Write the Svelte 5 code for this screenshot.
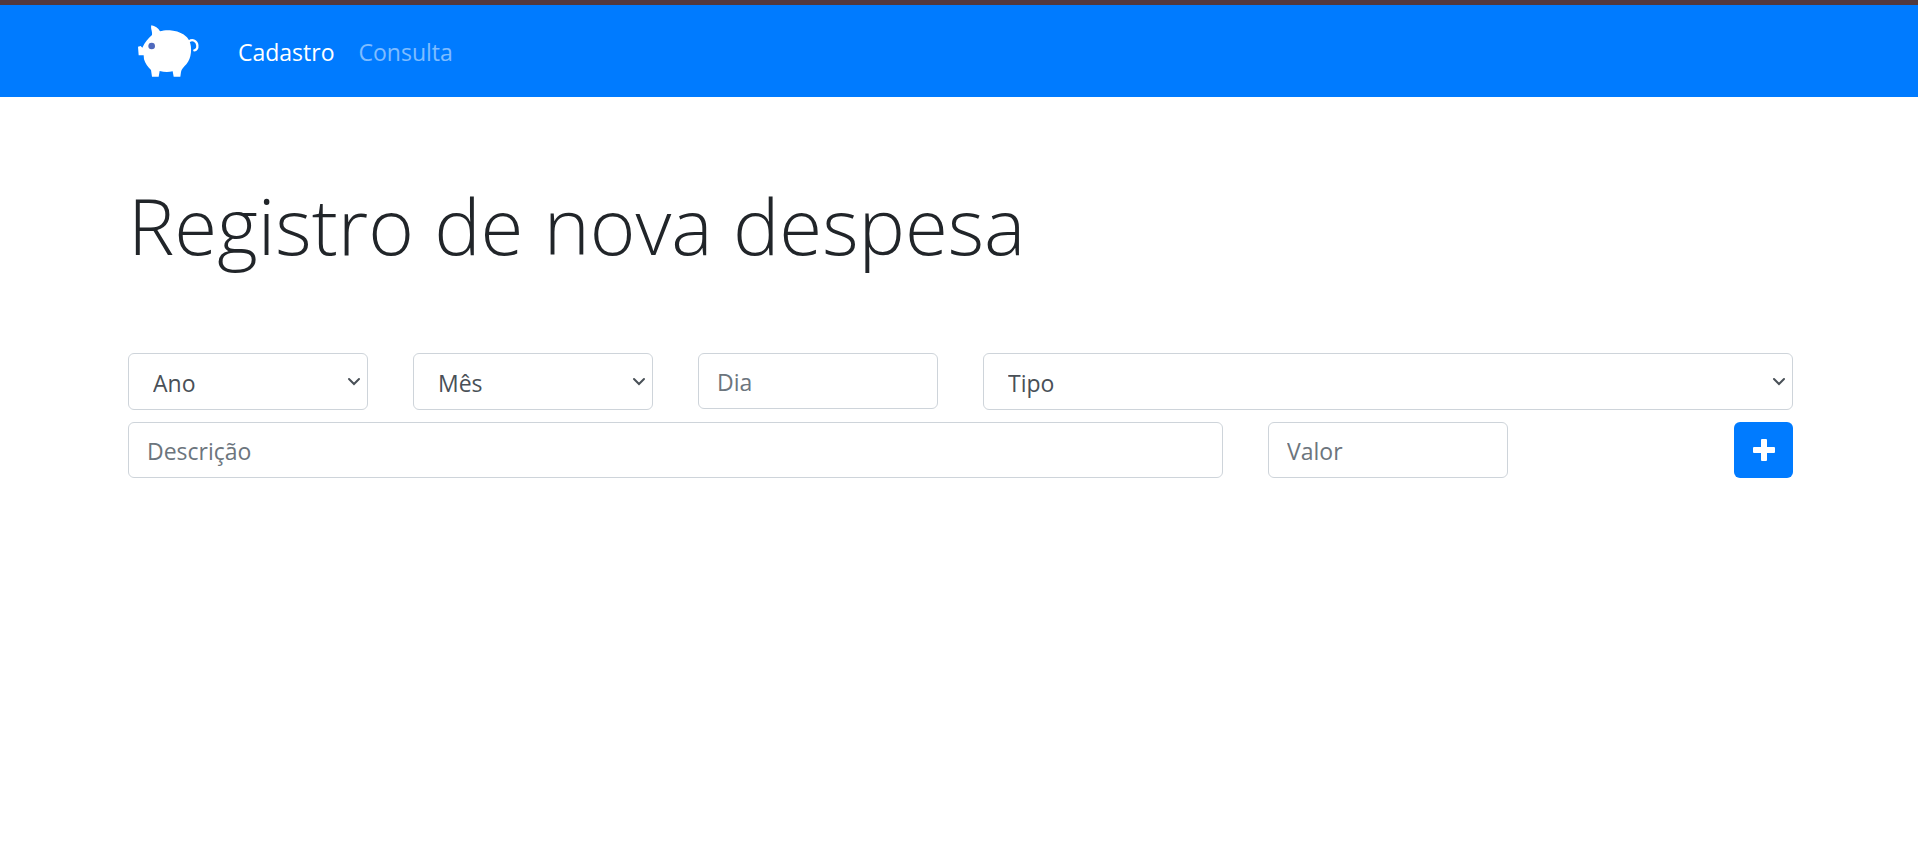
<script lang="ts">
  const years = ['2023', '2024', '2025'];
  const months = [
    'Janeiro', 'Fevereiro', 'Março', 'Abril', 'Maio', 'Junho',
    'Julho', 'Agosto', 'Setembro', 'Outubro', 'Novembro', 'Dezembro'
  ];
  const types = ['Alimentação', 'Educação', 'Lazer', 'Saúde', 'Transporte'];

  let year = $state('');
  let month = $state('');
  let day = $state('');
  let type = $state('');
  let description = $state('');
  let value = $state('');
</script>

{#snippet chevron()}
  <svg class="chevron" viewBox="0 0 14 10" aria-hidden="true">
    <path d="M2 2l5 5 5-5" />
  </svg>
{/snippet}

<nav class="navbar">
  <div class="container nav-content">
    <a class="brand" href="#home" aria-label="Início">
      <svg viewBox="50 72 186 162" aria-hidden="true">
        <path
          fill="#fff"
          d="M93 76C104 78 114 84 119 94C130 90 150 89 163 93C184 97 200 108 207 122C216 142 214 174 198 193C190 202 183 208 182 216L180 230L160 230L157 214C145 217 132 217 118 213L115 230L95 230L92 210C82 201 75 190 71 178L70 166L55 166L53 140L61 138L66 143C73 128 83 115 95 105C97 94 90 87 93 76Z"
        />
        <path class="tail" d="M206 124C217 116 230 123 231 136C232 145 228 151 222 151" />
        <circle cx="94" cy="138" r="10" fill="#4f69bd" />
      </svg>
    </a>
    <ul>
      <li><a class="active" href="#cadastro">Cadastro</a></li>
      <li><a href="#consulta">Consulta</a></li>
    </ul>
  </div>
</nav>

<main class="container">
  <h1>Registro de nova despesa</h1>

  <form onsubmit={(e) => e.preventDefault()}>
    <div class="field col-2">
      <select class="control" aria-label="Ano" bind:value={year}>
        <option value="">Ano</option>
        {#each years as item}
          <option value={item}>{item}</option>
        {/each}
      </select>
      {@render chevron()}
    </div>
    <div class="field col-2">
      <select class="control" aria-label="Mês" bind:value={month}>
        <option value="">Mês</option>
        {#each months as item, i}
          <option value={String(i + 1)}>{item}</option>
        {/each}
      </select>
      {@render chevron()}
    </div>
    <div class="field col-2">
      <input class="control" type="text" placeholder="Dia" aria-label="Dia" bind:value={day} />
    </div>
    <div class="field col-6">
      <select class="control" aria-label="Tipo" bind:value={type}>
        <option value="">Tipo</option>
        {#each types as item, i}
          <option value={String(i + 1)}>{item}</option>
        {/each}
      </select>
      {@render chevron()}
    </div>
    <div class="field col-8">
      <input class="control" type="text" placeholder="Descrição" aria-label="Descrição" bind:value={description} />
    </div>
    <div class="field col-2">
      <input class="control" type="text" placeholder="Valor" aria-label="Valor" bind:value />
    </div>
    <div class="field col-2 actions">
      <button type="submit" aria-label="Adicionar despesa">
        <svg viewBox="0 0 22 22" aria-hidden="true">
          <path d="M9 0h4q1 0 1 1v7h7q1 0 1 1v4q0 1-1 1h-7v7q0 1-1 1H9q-1 0-1-1v-7H1q-1 0-1-1V9q0-1 1-1h7V1q0-1 1-1z" />
        </svg>
      </button>
    </div>
  </form>
</main>

<style>
  :global(body) {
    background: #fff;
    color: #212529;
    font-family: 'Segoe UI', 'Open Sans', 'Noto Sans', sans-serif;
    font-size: 23px;
    line-height: 36px;
  }

  .container {
    box-sizing: border-box;
    width: 100%;
    max-width: 1668px;
    margin: 0 auto;
    padding-left: 3px;
  }

  .navbar {
    background: #007bff;
    border-top: 5px solid #53383d;
  }

  .nav-content {
    display: flex;
    align-items: center;
    height: 92px;
  }

  .brand {
    display: flex;
    margin: 0 27px 0 9px;
  }

  .brand svg {
    width: 62px;
    height: 54px;
  }

  .tail {
    fill: none;
    stroke: #fff;
    stroke-width: 7;
    stroke-linecap: round;
  }

  ul {
    display: flex;
    list-style: none;
    margin: 0;
    padding: 0;
  }

  li a {
    display: block;
    padding: 14px 12px 12px;
    color: rgba(255, 255, 255, 0.5);
    text-decoration: none;
  }

  li a.active {
    color: #fff;
  }

  h1 {
    margin: 72px 0;
    font-size: 78px;
    font-weight: 300;
    line-height: 112px;
  }

  form {
    display: grid;
    grid-template-columns: repeat(12, minmax(0, 1fr));
    gap: 12px 45px;
    align-items: start;
  }

  .field {
    position: relative;
    display: flex;
  }

  .col-2 {
    grid-column: span 2;
  }

  .col-6 {
    grid-column: span 6;
  }

  .col-8 {
    grid-column: span 8;
  }

  .control {
    box-sizing: border-box;
    width: 100%;
    height: 56px;
    margin: 0;
    padding: 10px 18px 8px;
    border: 1px solid #ced4da;
    border-radius: 6px;
    background: #fff;
    color: #495057;
    font: inherit;
  }

  .control::placeholder {
    color: #6c757d;
    opacity: 1;
  }

  select.control {
    appearance: none;
    height: 57px;
    padding: 10px 24px 8px;
  }

  .chevron {
    position: absolute;
    top: 24px;
    right: 7px;
    width: 14px;
    height: 10px;
    fill: none;
    stroke: #495057;
    stroke-width: 2;
    stroke-linecap: round;
    pointer-events: none;
  }

  .actions {
    justify-content: flex-end;
  }

  button {
    display: flex;
    align-items: center;
    justify-content: center;
    width: 59px;
    height: 56px;
    padding: 0;
    border: 0;
    border-radius: 6px;
    background: #007bff;
    cursor: pointer;
  }

  button svg {
    width: 22px;
    height: 22px;
    fill: #fff;
  }
</style>
